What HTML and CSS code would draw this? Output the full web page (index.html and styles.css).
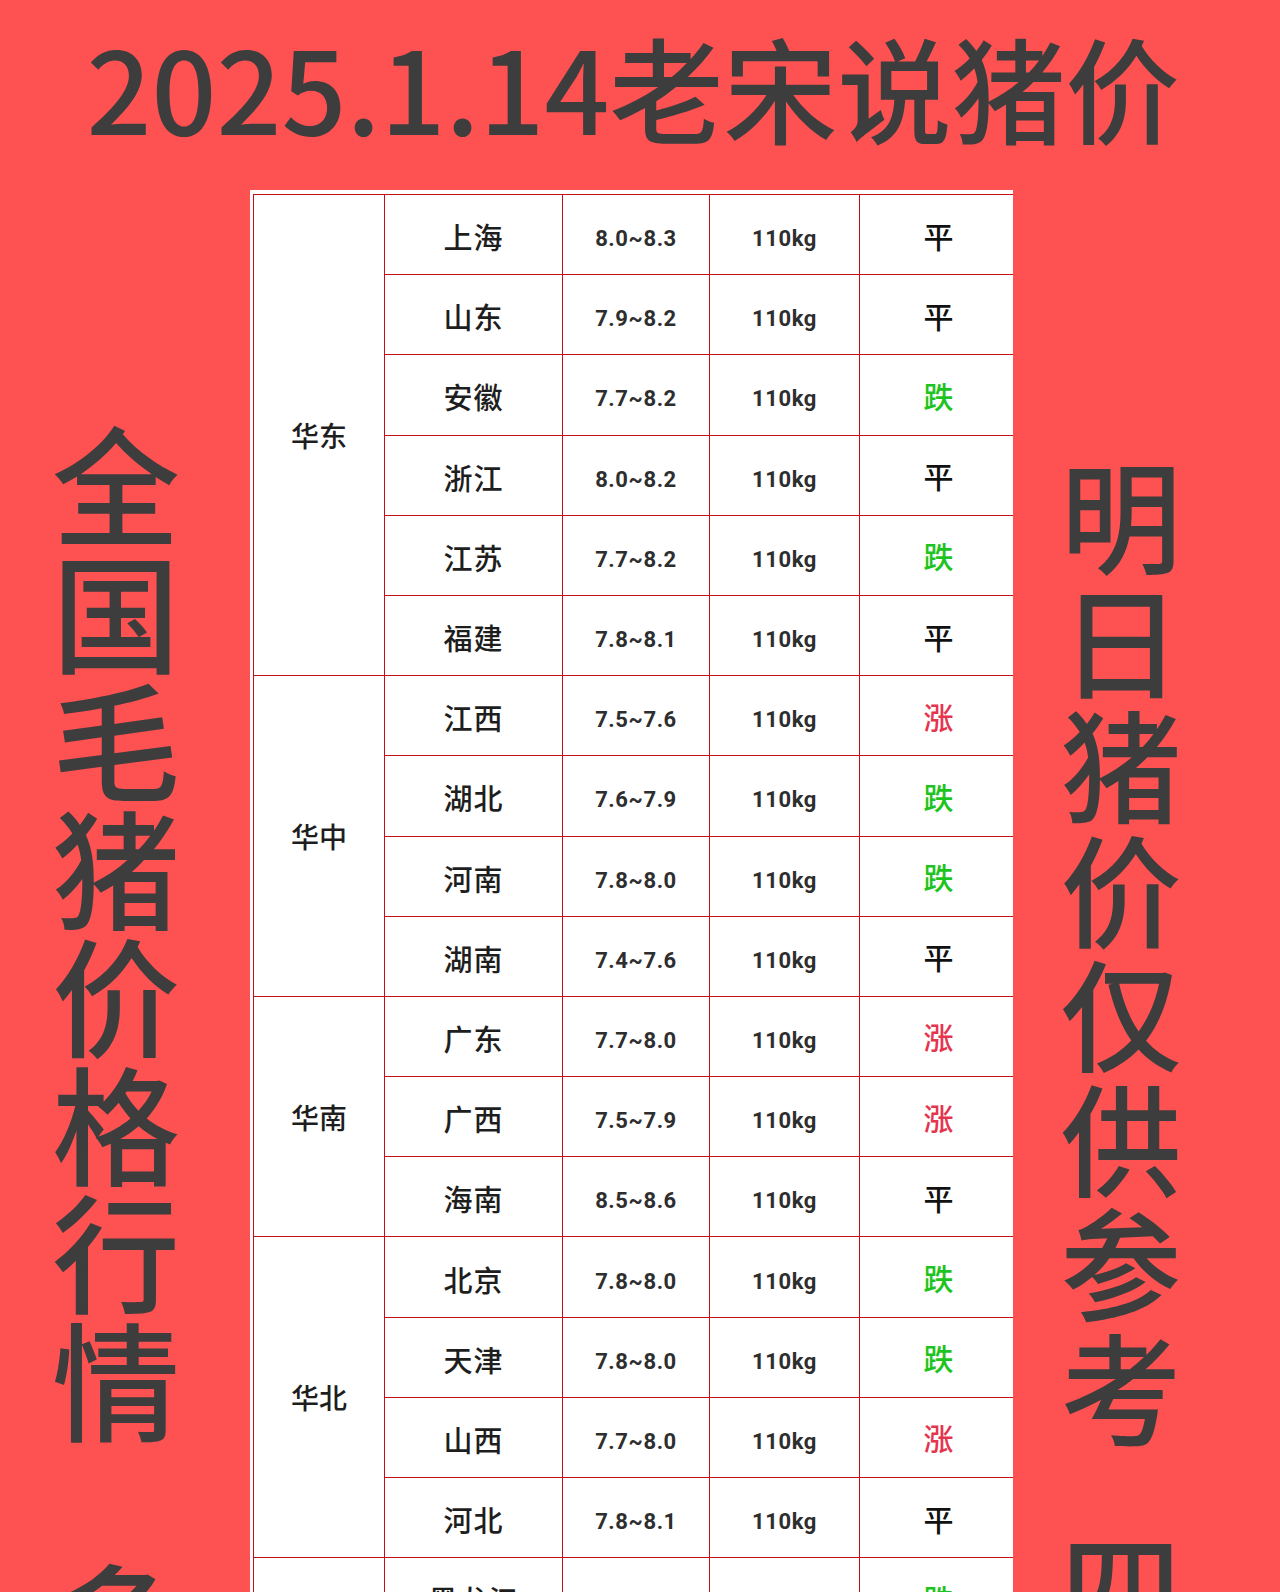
FILE: index.html
```html
<!DOCTYPE html>
<html lang="zh-CN">
<head>
<meta charset="utf-8">
<title>2025.1.14老宋说猪价</title>
<link rel="stylesheet" href="styles.css">
</head>
<body>
<div class="page">
  <header class="title">2025.1.14老宋说猪价</header>
  <main class="main">
    <aside class="side side-left">
      <div class="vtext">全国毛猪价格行情</div>
      <div class="vtext vtext-next">多</div>
    </aside>
    <section class="sheet">
      <table class="prices">
        <colgroup>
          <col class="c-region"><col class="c-prov"><col class="c-price"><col class="c-weight"><col class="c-trend">
        </colgroup>
        <tbody>
          <tr><td class="region" rowspan="6">华东</td><td class="prov">上海</td><td class="num">8.0~8.3</td><td class="num">110kg</td><td class="trend flat">平</td></tr>
          <tr><td class="prov">山东</td><td class="num">7.9~8.2</td><td class="num">110kg</td><td class="trend flat">平</td></tr>
          <tr><td class="prov">安徽</td><td class="num">7.7~8.2</td><td class="num">110kg</td><td class="trend down">跌</td></tr>
          <tr><td class="prov">浙江</td><td class="num">8.0~8.2</td><td class="num">110kg</td><td class="trend flat">平</td></tr>
          <tr><td class="prov">江苏</td><td class="num">7.7~8.2</td><td class="num">110kg</td><td class="trend down">跌</td></tr>
          <tr><td class="prov">福建</td><td class="num">7.8~8.1</td><td class="num">110kg</td><td class="trend flat">平</td></tr>
          <tr><td class="region" rowspan="4">华中</td><td class="prov">江西</td><td class="num">7.5~7.6</td><td class="num">110kg</td><td class="trend up">涨</td></tr>
          <tr><td class="prov">湖北</td><td class="num">7.6~7.9</td><td class="num">110kg</td><td class="trend down">跌</td></tr>
          <tr><td class="prov">河南</td><td class="num">7.8~8.0</td><td class="num">110kg</td><td class="trend down">跌</td></tr>
          <tr><td class="prov">湖南</td><td class="num">7.4~7.6</td><td class="num">110kg</td><td class="trend flat">平</td></tr>
          <tr><td class="region" rowspan="3">华南</td><td class="prov">广东</td><td class="num">7.7~8.0</td><td class="num">110kg</td><td class="trend up">涨</td></tr>
          <tr><td class="prov">广西</td><td class="num">7.5~7.9</td><td class="num">110kg</td><td class="trend up">涨</td></tr>
          <tr><td class="prov">海南</td><td class="num">8.5~8.6</td><td class="num">110kg</td><td class="trend flat">平</td></tr>
          <tr><td class="region" rowspan="4">华北</td><td class="prov">北京</td><td class="num">7.8~8.0</td><td class="num">110kg</td><td class="trend down">跌</td></tr>
          <tr><td class="prov">天津</td><td class="num">7.8~8.0</td><td class="num">110kg</td><td class="trend down">跌</td></tr>
          <tr><td class="prov">山西</td><td class="num">7.7~8.0</td><td class="num">110kg</td><td class="trend up">涨</td></tr>
          <tr><td class="prov">河北</td><td class="num">7.8~8.1</td><td class="num">110kg</td><td class="trend flat">平</td></tr>
          <tr><td class="region" rowspan="2">东北</td><td class="prov">黑龙江</td><td class="num">7.4~7.6</td><td class="num">110kg</td><td class="trend down">跌</td></tr>
          <tr><td class="prov">吉林</td><td class="num">7.5~7.7</td><td class="num">110kg</td><td class="trend flat">平</td></tr>
        </tbody>
      </table>
    </section>
    <aside class="side side-right">
      <div class="vtext">明日猪价仅供参考</div>
      <div class="vtext vtext-next">四</div>
    </aside>
  </main>
</div>
</body>
</html>
```

FILE: styles.css
```css
html, body {
  margin: 0;
  padding: 0;
}

body {
  background: #fe5151;
  font-family: "Noto Sans CJK SC", "Noto Sans", sans-serif;
  color: #3d3d3d;
}

.page {
  width: 1280px;
  height: 1592px;
  overflow: hidden;
}

.title {
  box-sizing: border-box;
  height: 190px;
  padding: 28px 14px 0 0;
  font-size: 114px;
  line-height: 116px;
  font-weight: 500;
  text-align: center;
  white-space: nowrap;
  color: #3d3d3d;
}

.main {
  display: flex;
  align-items: flex-start;
}

.side {
  box-sizing: border-box;
  display: flex;
  flex-direction: column;
  align-items: center;
  color: #3d3d3d;
  font-weight: 500;
}

.side-left {
  width: 250px;
  padding: 227px 18px 0 0;
  font-size: 128px;
  line-height: 128px;
}

.side-right {
  flex: 1;
  padding: 260px 51px 0 0;
  font-size: 121px;
  line-height: 124.5px;
}

.vtext {
  width: 1em;
  text-align: center;
  word-break: break-all;
}

.side-left .vtext-next {
  margin-top: 113px;
}

.side-right .vtext-next {
  margin-top: 76px;
}

.sheet {
  box-sizing: border-box;
  width: 763px;
  height: 1402px;
  padding: 4px 0 0 3px;
  background: #fff;
  overflow: hidden;
  flex: none;
}

.prices {
  border-collapse: collapse;
  table-layout: fixed;
  width: 764px;
}

.c-region { width: 131px; }
.c-prov { width: 178px; }
.c-price { width: 147px; }
.c-weight { width: 150px; }
.c-trend { width: 158px; }

.prices tr {
  height: 80.2px;
}

.prices td {
  border: 1px solid #c40f19;
  padding: 0;
  text-align: center;
  vertical-align: middle;
  color: #1e1e1e;
}

.region {
  font-size: 28px;
  font-weight: 500;
}

.prices td.prov {
  font-size: 29px;
  font-weight: 500;
  letter-spacing: 1px;
  padding-top: 3px;
}

.prices td.num {
  font-family: Roboto, "Noto Sans CJK SC", sans-serif;
  font-size: 22px;
  font-weight: 700;
  letter-spacing: 0.6px;
  color: #2e2e2e;
  padding-top: 8px;
}

.trend {
  font-size: 30px;
  font-weight: 500;
}

.trend.flat { color: #111; }
.trend.down { color: #1ec41e; }
.trend.up { color: #e5344e; }
```
